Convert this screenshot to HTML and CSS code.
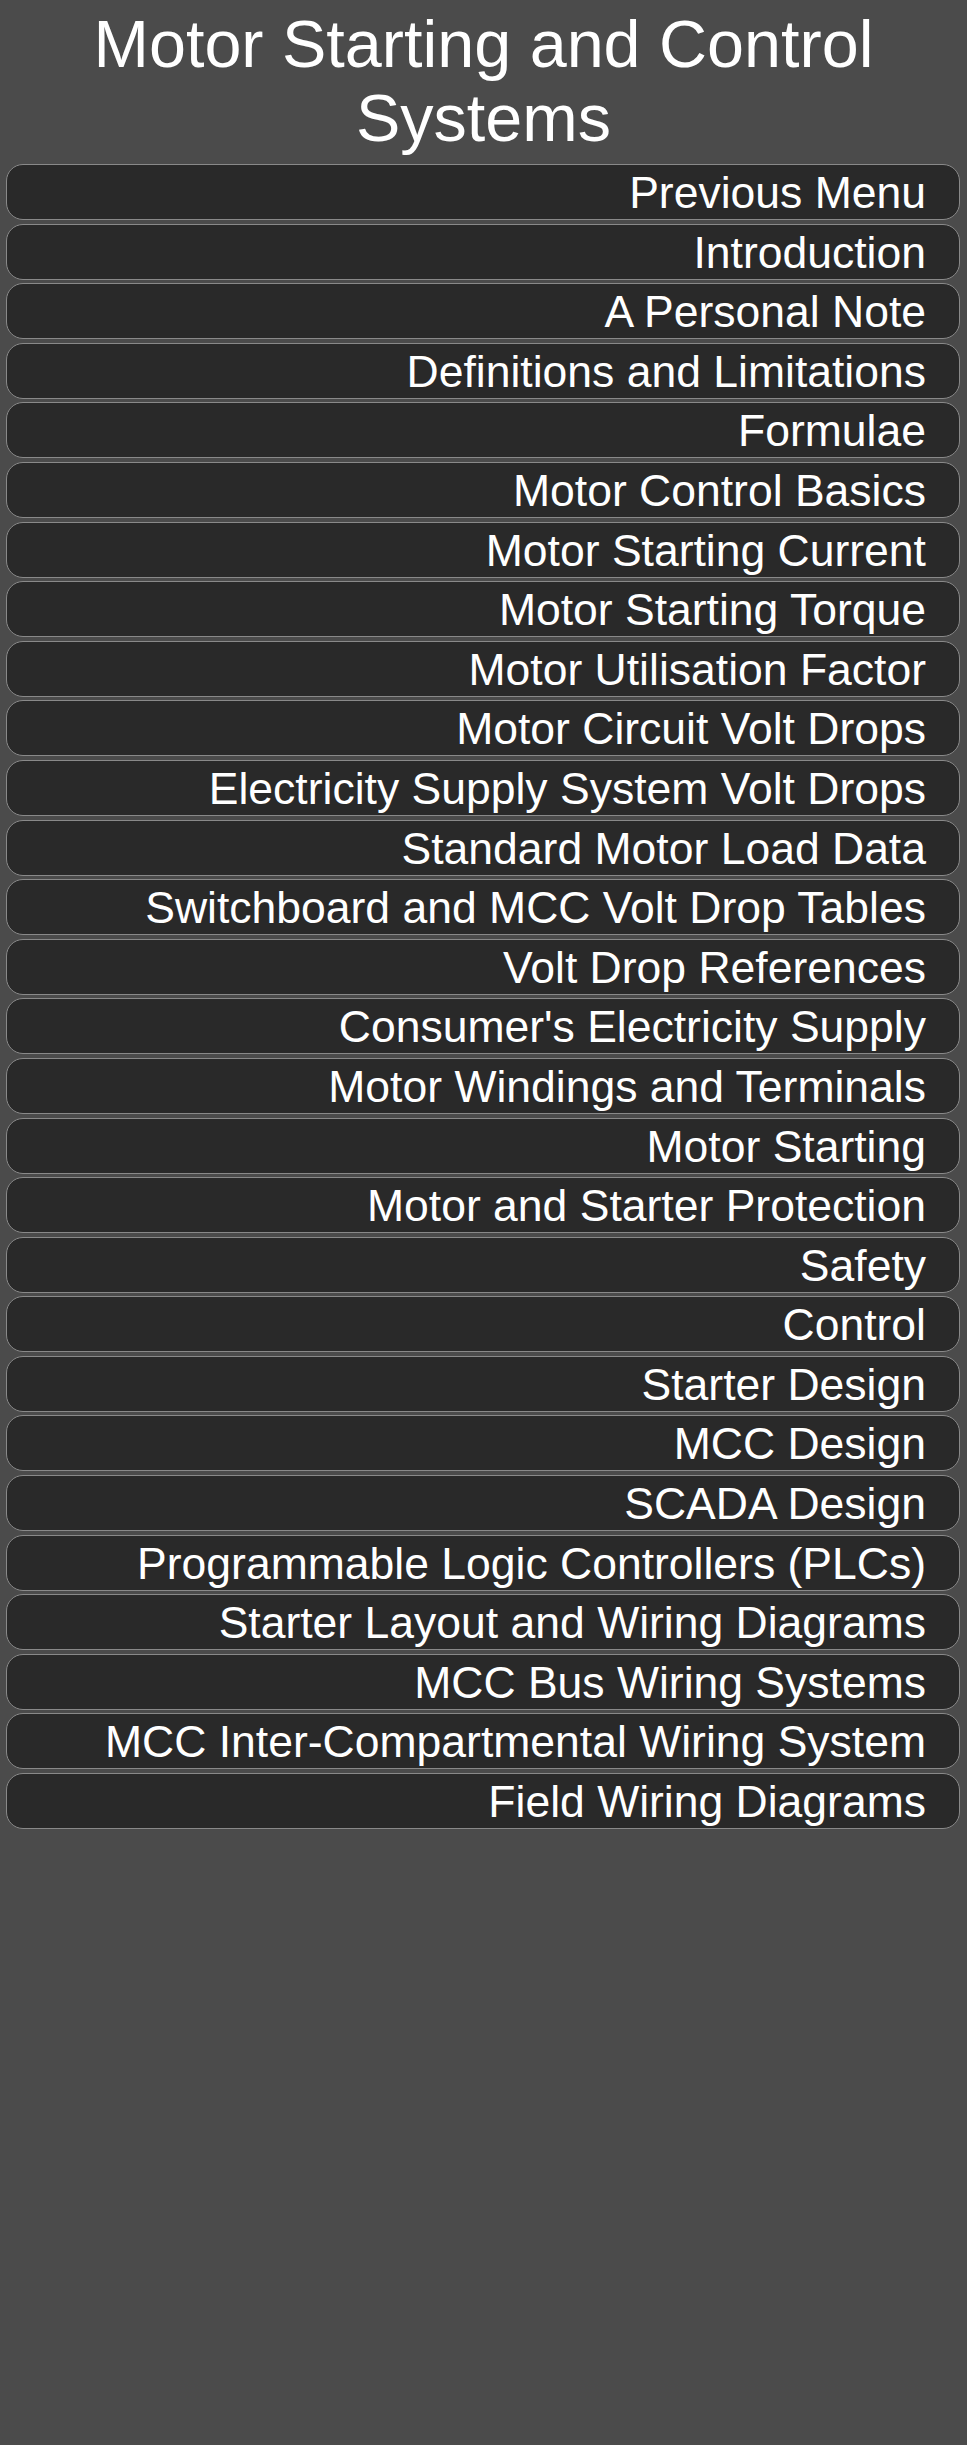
FILE: index.html
```html
<!doctype html>
<html lang="en">
  <head>
    <meta charset="utf-8">
    <meta name="viewport" content="width=device-width, initial-scale=1">
    <title>Motor Starting and Control Systems</title>
    <link rel="stylesheet" href="styles.css">
  </head>
  <body>
    <h1 class="title">Motor Starting and Control Systems</h1>
    <nav class="menu">
      <a class="menu__item" href="#">Previous Menu</a>
      <a class="menu__item" href="#">Introduction</a>
      <a class="menu__item" href="#">A Personal Note</a>
      <a class="menu__item" href="#">Definitions and Limitations</a>
      <a class="menu__item" href="#">Formulae</a>
      <a class="menu__item" href="#">Motor Control Basics</a>
      <a class="menu__item" href="#">Motor Starting Current</a>
      <a class="menu__item" href="#">Motor Starting Torque</a>
      <a class="menu__item" href="#">Motor Utilisation Factor</a>
      <a class="menu__item" href="#">Motor Circuit Volt Drops</a>
      <a class="menu__item" href="#">Electricity Supply System Volt Drops</a>
      <a class="menu__item" href="#">Standard Motor Load Data</a>
      <a class="menu__item" href="#">Switchboard and MCC Volt Drop Tables</a>
      <a class="menu__item" href="#">Volt Drop References</a>
      <a class="menu__item" href="#">Consumer's Electricity Supply</a>
      <a class="menu__item" href="#">Motor Windings and Terminals</a>
      <a class="menu__item" href="#">Motor Starting</a>
      <a class="menu__item" href="#">Motor and Starter Protection</a>
      <a class="menu__item" href="#">Safety</a>
      <a class="menu__item" href="#">Control</a>
      <a class="menu__item" href="#">Starter Design</a>
      <a class="menu__item" href="#">MCC Design</a>
      <a class="menu__item" href="#">SCADA Design</a>
      <a class="menu__item" href="#">Programmable Logic Controllers (PLCs)</a>
      <a class="menu__item" href="#">Starter Layout and Wiring Diagrams</a>
      <a class="menu__item" href="#">MCC Bus Wiring Systems</a>
      <a class="menu__item" href="#">MCC Inter-Compartmental Wiring System</a>
      <a class="menu__item" href="#">Field Wiring Diagrams</a>
    </nav>
  </body>
</html>
```

FILE: styles.css
```css
body{
  margin: 0;
  background: #4b4b4b;
  color: #fff;
  font-family: "Liberation Sans", Arial, Helvetica, sans-serif;
}
/*--------------------------*/
.title{
  margin: 7px 0 9px;
  font-size: 66.5px;
  font-weight: normal;
  line-height: 74px;
  text-align: center;
}
/*--------------------------*/
.menu{
  display: flex;
  flex-direction: column;
  gap: 3.6px;
  padding: 0 7px 0 6px;
}
.menu__item{
  display: block;
  padding: 3px 33px 1px;
  border: 1px solid #898989;
  border-radius: 17px;
  background: #292929;
  color: #fff;
  font-size: 44.5px;
  line-height: 50px;
  text-align: right;
  text-decoration: none;
}
```
